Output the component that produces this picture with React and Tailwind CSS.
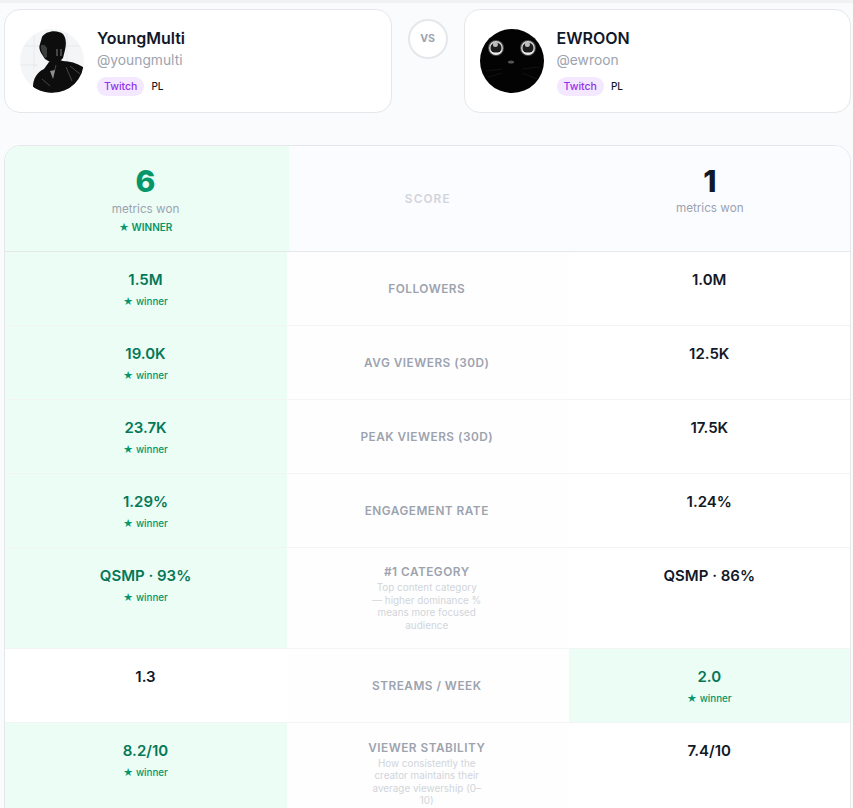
const rows = [
  { label: "FOLLOWERS", a: "1.5M", b: "1.0M", win: "a", h: "h-[74px]" },
  { label: "AVG VIEWERS (30D)", a: "19.0K", b: "12.5K", win: "a", h: "h-[74px]" },
  { label: "PEAK VIEWERS (30D)", a: "23.7K", b: "17.5K", win: "a", h: "h-[74px]" },
  { label: "ENGAGEMENT RATE", a: "1.29%", b: "1.24%", win: "a", h: "h-[74px]" },
  {
    label: "#1 CATEGORY",
    desc: "Top content category — higher dominance % means more focused audience",
    a: "QSMP · 93%",
    b: "QSMP · 86%",
    win: "a",
    h: "h-[101px]",
  },
  { label: "STREAMS / WEEK", a: "1.3", b: "2.0", win: "b", h: "h-[74px]" },
  {
    label: "VIEWER STABILITY",
    desc: "How consistently the creator maintains their average viewership (0–10)",
    a: "8.2/10",
    b: "7.4/10",
    win: "a",
    h: "h-[102px]",
  },
];

function YoungMultiAvatar() {
  return (
    <svg viewBox="0 0 64 64" className="w-16 h-16 rounded-full shrink-0">
      <defs>
        <filter id="soft">
          <feGaussianBlur stdDeviation="0.5" />
        </filter>
      </defs>
      <rect width="64" height="64" fill="#f3f5f7" />
      <path d="M0 17H64M0 36H18M47 0V32M14 0V40" stroke="#e3e6ea" strokeWidth="0.8" />
      <g filter="url(#soft)">
        <path d="M22 8 C25 2 37 0 43 5 C47 10 46 17 45 21 L43 29 C40 33 34 35 30 33 L25 30 C21 24 18 20 20 15Z" fill="#0b0b0b" />
        <path d="M21 16 C23 15 26 16 27 19 L27 28 L25 29 C22 24 20 20 21 16Z" fill="#3a3c3e" />
        <path d="M37 20 L37 27 M41 20 L41 27" stroke="#8a8a8a" strokeWidth="0.9" />
        <path d="M13 58 C13 50 17 43 24 40 L29 33 L40 31 L43 32 C49 32 57 34 63 38 C63 46 62 53 60 58 L54 63 L28 64 C22 63 17 62 13 58Z" fill="#0a0a0a" />
        <path d="M36 36 L33 48 M46 38 L52 52 M22 50 L30 57 M50 37 L60 45" stroke="#4f4f4f" strokeWidth="0.9" />
        <path d="M30 42 L35 41 L33 50Z" fill="#8d8d8d" />
      </g>
    </svg>
  );
}

function CatAvatar() {
  return (
    <svg viewBox="0 0 64 64" className="w-16 h-16 rounded-full shrink-0">
      <defs>
        <filter id="softcat">
          <feGaussianBlur stdDeviation="0.45" />
        </filter>
      </defs>
      <rect width="64" height="64" fill="#030303" />
      <g filter="url(#softcat)">
        <circle cx="16" cy="19" r="8" fill="#4a4a4a" />
        <circle cx="16" cy="19" r="6.2" fill="#1a1a1a" stroke="#d8d8d8" strokeWidth="1.4" />
        <path d="M9.8 21 C11.5 27 20.5 27 22.2 21 C20.5 24.4 11.5 24.4 9.8 21Z" fill="#f2f2f2" />
        <circle cx="15.4" cy="15.4" r="2.5" fill="#bdbdbd" />
        <circle cx="48" cy="19" r="8" fill="#4a4a4a" />
        <circle cx="48" cy="19" r="6.2" fill="#1a1a1a" stroke="#d8d8d8" strokeWidth="1.4" />
        <path d="M41.8 21 C43.5 27 52.5 27 54.2 21 C52.5 24.4 43.5 24.4 41.8 21Z" fill="#f2f2f2" />
        <circle cx="47.4" cy="15.4" r="2.5" fill="#bdbdbd" />
        <ellipse cx="31" cy="33" rx="3" ry="1.5" fill="#555" />
      </g>
      <path d="M6 42 L22 40 M8 48 L22 44 M42 40 L60 38 M42 44 L58 50" stroke="#2a2a2a" strokeWidth="0.4" />
    </svg>
  );
}

function ProfileCard({ name, handle, avatar }) {
  return (
    <div className="flex-1 h-[104px] bg-white border border-[#e5e7eb] rounded-2xl flex items-center gap-[13px] px-[15px]">
      {avatar}
      <div className="flex flex-col pt-[1px]">
        <div className="text-[16px] leading-6 font-semibold text-[#111827] -mt-[1px]">{name}</div>
        <div className="text-[13.8px] leading-5 text-[#9ca3af]">{handle}</div>
        <div className="flex items-center gap-[7px] mt-[7px]">
          <span className="h-[19px] px-[7px] rounded-full bg-[#f3e8ff] text-[#9333ea] text-[10.5px] font-medium flex items-center">
            Twitch
          </span>
          <span className="text-[10px] font-medium text-[#111827]">PL</span>
        </div>
      </div>
    </div>
  );
}

function ValueCell({ value, won, className }) {
  return (
    <div className={`pt-[18px] flex flex-col items-center ${won ? "bg-[#ecfdf5]" : "bg-white"} ${className}`}>
      <div className={`text-[15px] leading-[20px] font-semibold ${won ? "text-[#047857]" : "text-[#111827]"}`}>
        {value}
      </div>
      {won && <div className="text-[9.8px] leading-[14px] font-medium text-[#059669] mt-[4.5px]">★ winner</div>}
    </div>
  );
}

export default function App() {
  return (
    <div
      className="w-[853px] h-[808px] overflow-hidden bg-[#fafbfc] relative pl-1 pr-[2px] pt-[9px]"
      style={{ fontFamily: "Inter, 'Noto Sans', sans-serif" }}
    >
      <div className="absolute top-0 inset-x-0 h-[3px] bg-[#f1f2f4]" />

      <div className="flex items-start gap-4">
        <ProfileCard name="YoungMulti" handle="@youngmulti" avatar={<YoungMultiAvatar />} />
        <div className="w-10 h-10 mt-[10px] shrink-0 rounded-full bg-white border-2 border-[#e5e7eb] flex items-center justify-center text-[10.5px] font-bold text-[#9ca3af]">
          VS
        </div>
        <ProfileCard name="EWROON" handle="@ewroon" avatar={<CatAvatar />} />
      </div>

      <div className="mt-[32px] bg-white border border-[#e5e7eb] rounded-t-2xl overflow-hidden">
        <div className="grid grid-cols-[284px_1fr_1fr] h-[106px] border-b border-[#e5e7eb]">
          <div className="bg-[#ecfdf5] flex flex-col items-center pt-[16px] pr-[3px]">
            <div className="text-[30px] leading-[38px] font-extrabold text-[#059669]">6</div>
            <div className="text-[11.7px] leading-4 text-[#9ca3af] mt-[1px]">metrics won</div>
            <div className="text-[10px] leading-[14px] font-semibold text-[#059669] mt-[3px]">★ WINNER</div>
          </div>
          <div className="bg-[#fbfcff] flex items-center justify-center pr-[3px] pt-[3px]">
            <span className="text-[11.8px] font-semibold tracking-[1.1px] text-[#d1d5db]">SCORE</span>
          </div>
          <div className="bg-[#fbfcff] flex flex-col items-center pt-[16px]">
            <div className="text-[30px] leading-[38px] font-extrabold text-[#111827]">1</div>
            <div className="text-[11.7px] leading-4 text-[#9ca3af]">metrics won</div>
          </div>
        </div>

        {rows.map((r) => (
          <div key={r.label} className={`grid grid-cols-[282px_1fr_1fr] border-b border-[#f3f4f6] ${r.h}`}>
            <ValueCell value={r.a} won={r.win === "a"} className="pr-[1px]" />
            <div className="bg-[#fefefe] flex flex-col items-center justify-center text-center pr-[2px]">
              <div className="text-[11.8px] leading-[14px] font-semibold tracking-[0.5px] text-[#9ca3af] whitespace-nowrap">
                {r.label}
              </div>
              {r.desc && <div className="w-[112px] text-[9.9px] leading-[12.5px] text-[#d1d5db] mt-[2px]">{r.desc}</div>}
            </div>
            <ValueCell value={r.b} won={r.win === "b"} />
          </div>
        ))}
      </div>
    </div>
  );
}
